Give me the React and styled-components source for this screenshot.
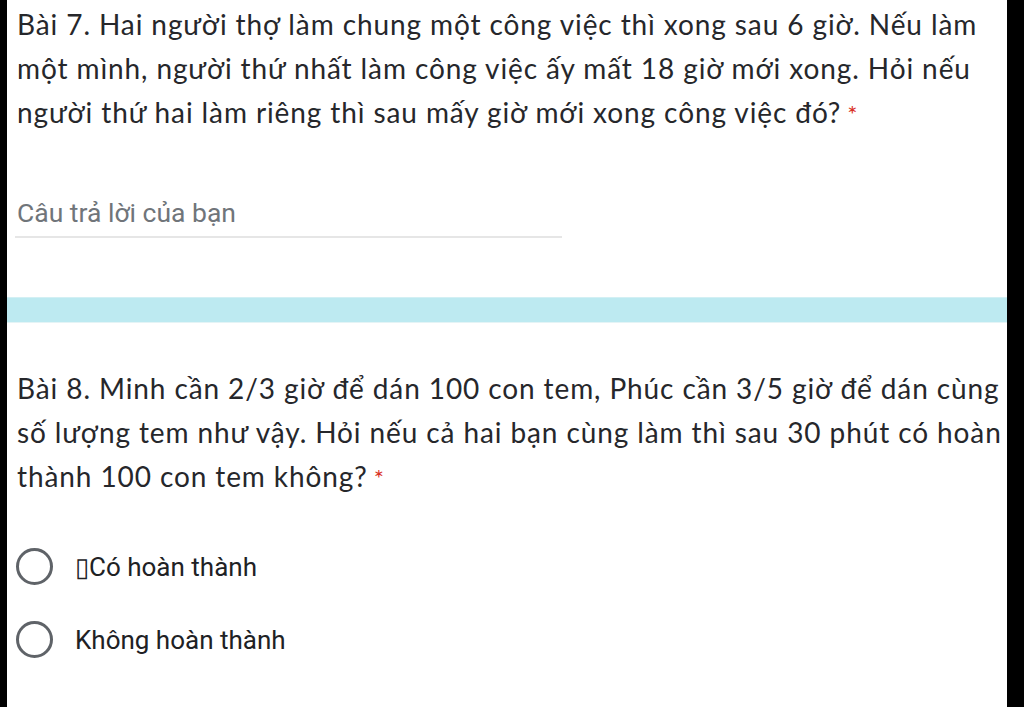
import React from "react";
import styled, { createGlobalStyle } from "styled-components";

const GlobalStyle = createGlobalStyle`
  html, body {
    margin: 0;
    padding: 0;
    background: #000;
  }
`;

const Screen = styled.div`
  width: 1024px;
  height: 707px;
  background: #000;
  display: flex;
  overflow: hidden;
`;

const Panel = styled.div`
  margin-left: 7px;
  width: 1000px;
  height: 707px;
  background: #ffffff;
  overflow: hidden;
  display: flex;
  flex-direction: column;
`;

const Question = styled.div`
  padding: ${(p) => p.$pad};
`;

const Title = styled.div`
  font-family: "Lato", "Noto Sans", sans-serif;
  font-size: 28px;
  letter-spacing: 0.9px;
  line-height: 44px;
  color: #26272b;
  white-space: nowrap;
`;

const Star = styled.span`
  color: #d93025;
  margin-left: 6px;
  font-size: 24px;
`;

const AnswerField = styled.div`
  margin-top: ${(p) => p.$top};
  margin-left: 8px;
  width: 545px;
  border-bottom: 2px solid #e6e6e6;
  padding: 0 0 8px 2px;
  font-family: "Roboto", "Noto Sans", sans-serif;
  font-size: 26.5px;
  line-height: 30px;
  color: #70757a;
`;

const Divider = styled.div`
  margin-top: ${(p) => p.$top};
  height: 24px;
  background: #bdeaf1;
  border-top: 1px solid #d3f0f4;
  border-bottom: 1px solid #e4f4f6;
`;

const Options = styled.div`
  margin-top: ${(p) => p.$top};
  margin-left: -1px;
  display: flex;
  flex-direction: column;
  gap: 36px;
`;

const Option = styled.label`
  display: flex;
  align-items: center;
  gap: 22px;
  font-family: "Roboto", "Noto Sans", sans-serif;
  font-size: 26px;
  color: #202124;
`;

const Radio = styled.span`
  width: 31px;
  height: 31px;
  border: 3px solid #5f6368;
  border-radius: 50%;
  flex: none;
`;

export default function App() {
  return (
    <Screen>
      <GlobalStyle />
      <Panel>
        <Question $pad="2px 0 0 10px">
          <Title>
            Bài 7. Hai người thợ làm chung một công việc thì xong sau 6 giờ. Nếu làm
            <br />
            một mình, người thứ nhất làm công việc ấy mất 18 giờ mới xong. Hỏi nếu
            <br />
            người thứ hai làm riêng thì sau mấy giờ mới xong công việc đó?
            <Star>*</Star>
          </Title>
        </Question>
        <AnswerField $top="62px">Câu trả lời của bạn</AnswerField>
        <Divider $top="59px" />
        <Question $pad="43px 0 0 10px">
          <Title>
            Bài 8. Minh cần 2/3 giờ để dán 100 con tem, Phúc cần 3/5 giờ để dán cùng
            <br />
            số lượng tem như vậy. Hỏi nếu cả hai bạn cùng làm thì sau 30 phút có hoàn
            <br />
            thành 100 con tem không?
            <Star>*</Star>
          </Title>
          <Options $top="48px">
            <Option>
              <Radio />
              ▯Có hoàn thành
            </Option>
            <Option>
              <Radio />
              Không hoàn thành
            </Option>
          </Options>
        </Question>
      </Panel>
    </Screen>
  );
}
